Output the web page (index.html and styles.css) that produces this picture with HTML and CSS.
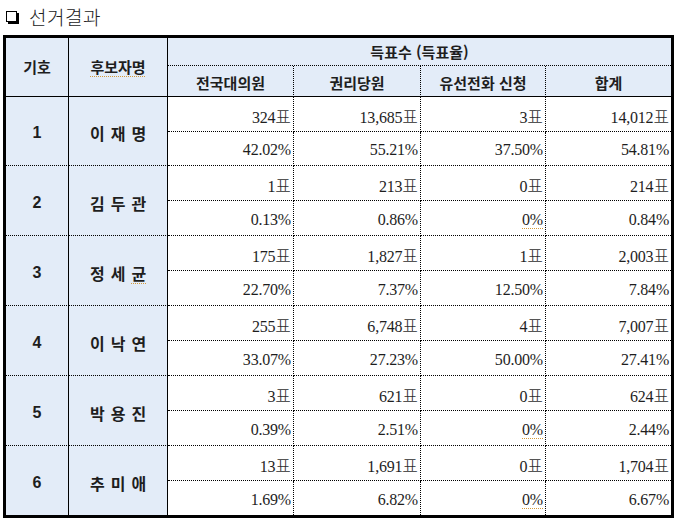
FILE: index.html
```html
<!DOCTYPE html>
<html lang="ko">
<head>
<meta charset="utf-8">
<title>선거결과</title>
<link rel="stylesheet" href="styles.css">
</head>
<body>
<div class="title"><span class="box"></span><span class="title-text">선거결과</span></div>
<div class="frame">
<table class="results">
<colgroup>
<col class="c1"><col class="c2"><col class="c3"><col class="c4"><col class="c5"><col class="c6">
</colgroup>
<thead>
<tr class="h1">
<th rowspan="2" class="hd s-right s-bottom">기호</th>
<th rowspan="2" class="hd s-right s-bottom"><span class="spell">후보자명</span></th>
<th colspan="4" class="hd d-bottom">득표수 (득표율)</th>
</tr>
<tr class="h2">
<th class="hd d-right s-bottom">전국대의원</th>
<th class="hd d-right s-bottom">권리당원</th>
<th class="hd d-right s-bottom">유선전화 신청</th>
<th class="hd s-bottom">합계</th>
</tr>
</thead>
<tbody>
<tr class="ra"><td rowspan="2" class="num s-right d-bottom">1</td><td rowspan="2" class="name s-right d-bottom">이 재 명</td><td class="v d-right d-bottom">324<span class="p">표</span></td><td class="v d-right d-bottom">13,685<span class="p">표</span></td><td class="v d-right d-bottom">3<span class="p">표</span></td><td class="v d-bottom">14,012<span class="p">표</span></td></tr>
<tr class="rb short"><td class="v d-right d-bottom">42.02%</td><td class="v d-right d-bottom">55.21%</td><td class="v d-right d-bottom">37.50%</td><td class="v d-bottom">54.81%</td></tr>

<tr class="ra"><td rowspan="2" class="num s-right d-bottom">2</td><td rowspan="2" class="name s-right d-bottom">김 두 관</td><td class="v d-right d-bottom">1<span class="p">표</span></td><td class="v d-right d-bottom">213<span class="p">표</span></td><td class="v d-right d-bottom">0<span class="p">표</span></td><td class="v d-bottom">214<span class="p">표</span></td></tr>
<tr class="rb"><td class="v d-right d-bottom">0.13%</td><td class="v d-right d-bottom">0.86%</td><td class="v d-right d-bottom"><span class="spell">0%</span></td><td class="v d-bottom">0.84%</td></tr>

<tr class="ra"><td rowspan="2" class="num s-right d-bottom">3</td><td rowspan="2" class="name s-right d-bottom">정 세 <span class="spell">균</span></td><td class="v d-right d-bottom">175<span class="p">표</span></td><td class="v d-right d-bottom">1,827<span class="p">표</span></td><td class="v d-right d-bottom">1<span class="p">표</span></td><td class="v d-bottom">2,003<span class="p">표</span></td></tr>
<tr class="rb"><td class="v d-right d-bottom">22.70%</td><td class="v d-right d-bottom">7.37%</td><td class="v d-right d-bottom">12.50%</td><td class="v d-bottom">7.84%</td></tr>

<tr class="ra"><td rowspan="2" class="num s-right d-bottom">4</td><td rowspan="2" class="name s-right d-bottom">이 낙 연</td><td class="v d-right d-bottom">255<span class="p">표</span></td><td class="v d-right d-bottom">6,748<span class="p">표</span></td><td class="v d-right d-bottom">4<span class="p">표</span></td><td class="v d-bottom">7,007<span class="p">표</span></td></tr>
<tr class="rb"><td class="v d-right d-bottom">33.07%</td><td class="v d-right d-bottom">27.23%</td><td class="v d-right d-bottom">50.00%</td><td class="v d-bottom">27.41%</td></tr>

<tr class="ra"><td rowspan="2" class="num s-right d-bottom">5</td><td rowspan="2" class="name s-right d-bottom">박 용 진</td><td class="v d-right d-bottom">3<span class="p">표</span></td><td class="v d-right d-bottom">621<span class="p">표</span></td><td class="v d-right d-bottom">0<span class="p">표</span></td><td class="v d-bottom">624<span class="p">표</span></td></tr>
<tr class="rb"><td class="v d-right d-bottom">0.39%</td><td class="v d-right d-bottom">2.51%</td><td class="v d-right d-bottom"><span class="spell">0%</span></td><td class="v d-bottom">2.44%</td></tr>

<tr class="ra"><td rowspan="2" class="num s-right">6</td><td rowspan="2" class="name s-right">추 미 애</td><td class="v d-right d-bottom">13<span class="p">표</span></td><td class="v d-right d-bottom">1,691<span class="p">표</span></td><td class="v d-right d-bottom">0<span class="p">표</span></td><td class="v d-bottom">1,704<span class="p">표</span></td></tr>
<tr class="rb short"><td class="v d-right">1.69%</td><td class="v d-right">6.82%</td><td class="v d-right"><span class="spell">0%</span></td><td class="v">6.67%</td></tr>
</tbody>
</table>
</div>
</body>
</html>
```

FILE: styles.css
```css
html, body {
  margin: 0;
  padding: 0;
  background: #ffffff;
}

body {
  width: 676px;
  height: 522px;
  overflow: hidden;
  font-family: "Noto Sans CJK KR", "Noto Sans", sans-serif;
  color: #1a1a1a;
}

.title {
  height: 35px;
  display: flex;
  align-items: center;
  padding-left: 6px;
  box-sizing: border-box;
  padding-bottom: 3px;
}

.box {
  width: 9px;
  height: 9px;
  border: 1px solid #000;
  box-shadow: 2px 2px 0 #000;
  margin-right: 12px;
  margin-top: 1px;
}

.title-text {
  font-family: "Noto Sans CJK KR", sans-serif;
  font-weight: 300;
  font-size: 19px;
  letter-spacing: 0.5px;
  color: #222;
}

.frame {
  margin-left: 3px;
  width: 665px;
  border: 3px solid #000;
}

.results {
  width: 665px;
  table-layout: fixed;
  border-collapse: separate;
  border-spacing: 0;
}

.c1 { width: 63px; }
.c2 { width: 99px; }
.c3 { width: 126px; }
.c4 { width: 127px; }
.c5 { width: 125px; }
.c6 { width: 125px; }

th, td {
  padding: 0;
  box-sizing: border-box;
}

.h1 { height: 28px; }
.h2 { height: 31px; }
.ra { height: 35px; }
.rb { height: 35px; }
.rb.short { height: 34px; }

.hd {
  background: #e3ecf8;
  font-family: "Noto Sans CJK KR", sans-serif;
  font-weight: 700;
  font-size: 15px;
  color: #1e1e1e;
  text-align: center;
  vertical-align: middle;
  line-height: 18px;
}

.h2 .hd {
  padding-top: 3px;
}

.num {
  background: #e3ecf8;
  text-align: center;
  font-family: "Liberation Sans", Arial, sans-serif;
  font-weight: 700;
  font-size: 16px;
  color: #1e1e1e;
  padding-top: 4px;
}

.name {
  background: #e3ecf8;
  text-align: center;
  font-family: "Noto Sans CJK KR", sans-serif;
  font-weight: 700;
  font-size: 16px;
  letter-spacing: 0.8px;
  color: #1e1e1e;
  padding-top: 4px;
  padding-left: 1px;
}

.v {
  text-align: right;
  padding-right: 2px;
  padding-top: 3px;
  font-family: "Liberation Serif", "Times New Roman", serif;
  font-size: 16px;
  letter-spacing: -0.2px;
  color: #1e1e1e;
  white-space: nowrap;
}

.p {
  font-family: "Noto Sans CJK KR", sans-serif;
  font-weight: 300;
  font-size: 17px;
  color: #2e2e2e;
  letter-spacing: 0;
  margin-left: 0;
}

.spell {
  text-decoration: underline dotted #d39a3c;
  text-decoration-thickness: 1px;
  text-underline-offset: 3px;
}

.s-right { border-right: 1px solid #000; }
.s-bottom { border-bottom: 1px solid #000; }
.d-right { border-right: 1px dotted #000; }
.d-bottom { border-bottom: 1px dotted #000; }
```
